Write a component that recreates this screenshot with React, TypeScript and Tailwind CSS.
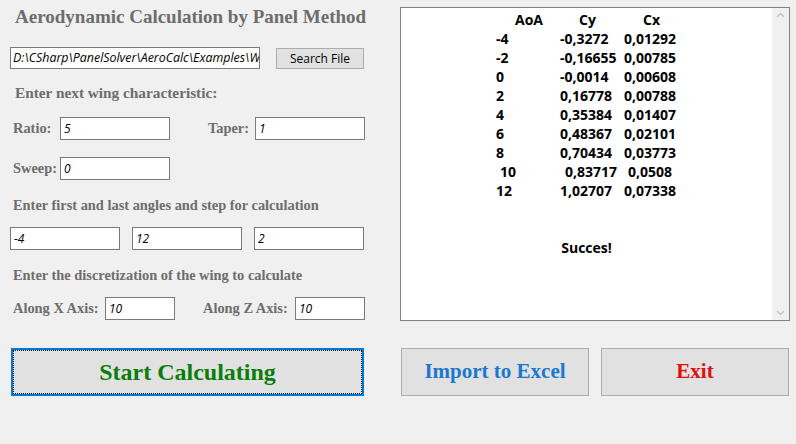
import React from "react";

const serif = { fontFamily: '"Liberation Serif", "Times New Roman", serif' };
const ui = { fontFamily: '"Open Sans", "Noto Sans", sans-serif' };
const mono = { fontFamily: '"Open Sans", "Noto Sans", sans-serif' };

function Field({ value, w }: { value: string; w: string }) {
  return (
    <div
      className={`${w} h-[23px] bg-white border border-[#7a7a7a] flex items-center pl-[3px] text-[12px] italic text-black overflow-hidden whitespace-nowrap`}
      style={ui}
    >
      {value}
    </div>
  );
}

function Label({ children, cls }: { children: React.ReactNode; cls: string }) {
  return (
    <div className={`${cls} font-bold text-[#6d6d6d] whitespace-nowrap`} style={serif}>
      {children}
    </div>
  );
}

const rows: [string, string, string][] = [
  ["-4", "-0,3272", "0,01292"],
  ["-2", "-0,16655", "0,00785"],
  ["0", "-0,0014", "0,00608"],
  ["2", "0,16778", "0,00788"],
  ["4", "0,35384", "0,01407"],
  ["6", "0,48367", "0,02101"],
  ["8", "0,70434", "0,03773"],
];

export default function App() {
  return (
    <div className="w-[796px] h-[444px] bg-[#f0f0f0] flex flex-col overflow-hidden">
      <div className="flex h-[348px]">
        {/* Left column */}
        <div className="w-[400px] flex flex-col">
          <div className="h-[47px] pl-[15px] pt-[6px]">
            <div className="text-[19px] leading-[22px] font-bold text-[#6d6d6d] whitespace-nowrap" style={serif}>
              Aerodynamic Calculation by Panel Method
            </div>
          </div>
          <div className="h-[22px] flex">
            <div
              className="ml-[10px] w-[250px] h-[22px] bg-white border border-[#7a7a7a] flex items-center pl-[2px] text-[12.4px] italic text-black overflow-hidden whitespace-nowrap"
              style={ui}
            >
              D:\CSharp\PanelSolver\AeroCalc\Examples\W
            </div>
            <div
              className="ml-[16px] mt-[1px] w-[88px] h-[21px] bg-[#e1e1e1] border border-[#adadad] flex items-center justify-center text-[12px] text-black"
              style={ui}
            >
              Search File
            </div>
          </div>
          <div className="h-[48px] flex items-center pl-[15px]">
            <Label cls="text-[15.3px]">Enter next wing characteristic:</Label>
          </div>
          <div className="h-[23px] flex items-center">
            <Label cls="w-[60px] pl-[13px] text-[14.4px]">Ratio:</Label>
            <Field value="5" w="w-[110px]" />
            <Label cls="w-[85px] pl-[38px] text-[14.4px]">Taper:</Label>
            <Field value="1" w="w-[110px]" />
          </div>
          <div className="h-[17px]" />
          <div className="h-[23px] flex items-center">
            <Label cls="w-[60px] pl-[13px] text-[14.4px]">Sweep:</Label>
            <Field value="0" w="w-[110px]" />
          </div>
          <div className="h-[47px] flex items-center pl-[13px] pt-[5px]">
            <Label cls="text-[14.4px]">Enter first and last angles and step for calculation</Label>
          </div>
          <div className="h-[23px] flex items-center gap-[12px] pl-[10px]">
            <Field value="-4" w="w-[110px]" />
            <Field value="12" w="w-[110px]" />
            <Field value="2" w="w-[110px]" />
          </div>
          <div className="h-[47px] flex items-center pl-[13px] pt-[5px]">
            <Label cls="text-[14.4px]">Enter the discretization of the wing to calculate</Label>
          </div>
          <div className="h-[23px] flex items-center">
            <Label cls="w-[105px] pl-[13px] text-[14.4px]">Along X Axis:</Label>
            <Field value="10" w="w-[70px]" />
            <Label cls="w-[120px] pl-[28px] text-[14.4px]">Along Z Axis:</Label>
            <Field value="10" w="w-[70px]" />
          </div>
        </div>

        {/* Right output box */}
        <div className="mt-[7px] w-[390px] h-[314px] bg-white border border-[#828282] flex">
          <div className="flex-1 pt-[2px] text-[14px] leading-[19px] font-bold text-black" style={mono}>
            <div className="w-[181px] mx-auto flex">
              <span className="w-[83px] pl-[19px]">AoA</span>
              <span className="w-[64px]">Cy</span>
              <span>Cx</span>
            </div>
            {rows.map((r) => (
              <div key={r[0]} className="w-[181px] mx-auto flex">
                <span className="w-[64px]">{r[0]}</span>
                <span className="w-[64px]">{r[1]}</span>
                <span>{r[2]}</span>
              </div>
            ))}
            <div className="w-[181px] mx-auto flex">
              <span className="w-[69px] pl-[4px]">10</span>
              <span className="w-[63px]">0,83717</span>
              <span>0,0508</span>
            </div>
            <div className="w-[181px] mx-auto flex">
              <span className="w-[64px]">12</span>
              <span className="w-[64px]">1,02707</span>
              <span>0,07338</span>
            </div>
            <div className="h-[38px]" />
            <div className="text-center">Succes!</div>
          </div>
          <div className="w-[17px] bg-[#f0f0f0] flex flex-col justify-between items-center py-[4px]">
            <svg width="9" height="6" viewBox="0 0 9 6">
              <path d="M1 5 L4.5 1.5 L8 5" stroke="#c2c2c2" strokeWidth="1.5" fill="none" />
            </svg>
            <svg width="9" height="6" viewBox="0 0 9 6">
              <path d="M1 1 L4.5 4.5 L8 1" stroke="#c2c2c2" strokeWidth="1.5" fill="none" />
            </svg>
          </div>
        </div>
      </div>

      {/* Bottom buttons */}
      <div className="flex h-[48px]">
        <div className="ml-[11px] w-[353px] h-[48px] bg-[#e1e1e1] border-2 border-[#0078d7] relative flex items-center justify-center">
          <span className="absolute inset-0 border border-dotted border-black" />
          <span className="text-[24px] font-bold text-[#0b7d0b]" style={serif}>
            Start Calculating
          </span>
        </div>
        <div className="ml-[37px] w-[188px] h-[48px] bg-[#e1e1e1] border border-[#adadad] flex items-center justify-center">
          <span className="text-[21px] font-bold text-[#1a78d2]" style={serif}>
            Import to Excel
          </span>
        </div>
        <div className="ml-[12px] w-[188px] h-[48px] bg-[#e1e1e1] border border-[#adadad] flex items-center justify-center">
          <span className="text-[21px] font-bold text-[#e10e0e]" style={serif}>
            Exit
          </span>
        </div>
      </div>
    </div>
  );
}
